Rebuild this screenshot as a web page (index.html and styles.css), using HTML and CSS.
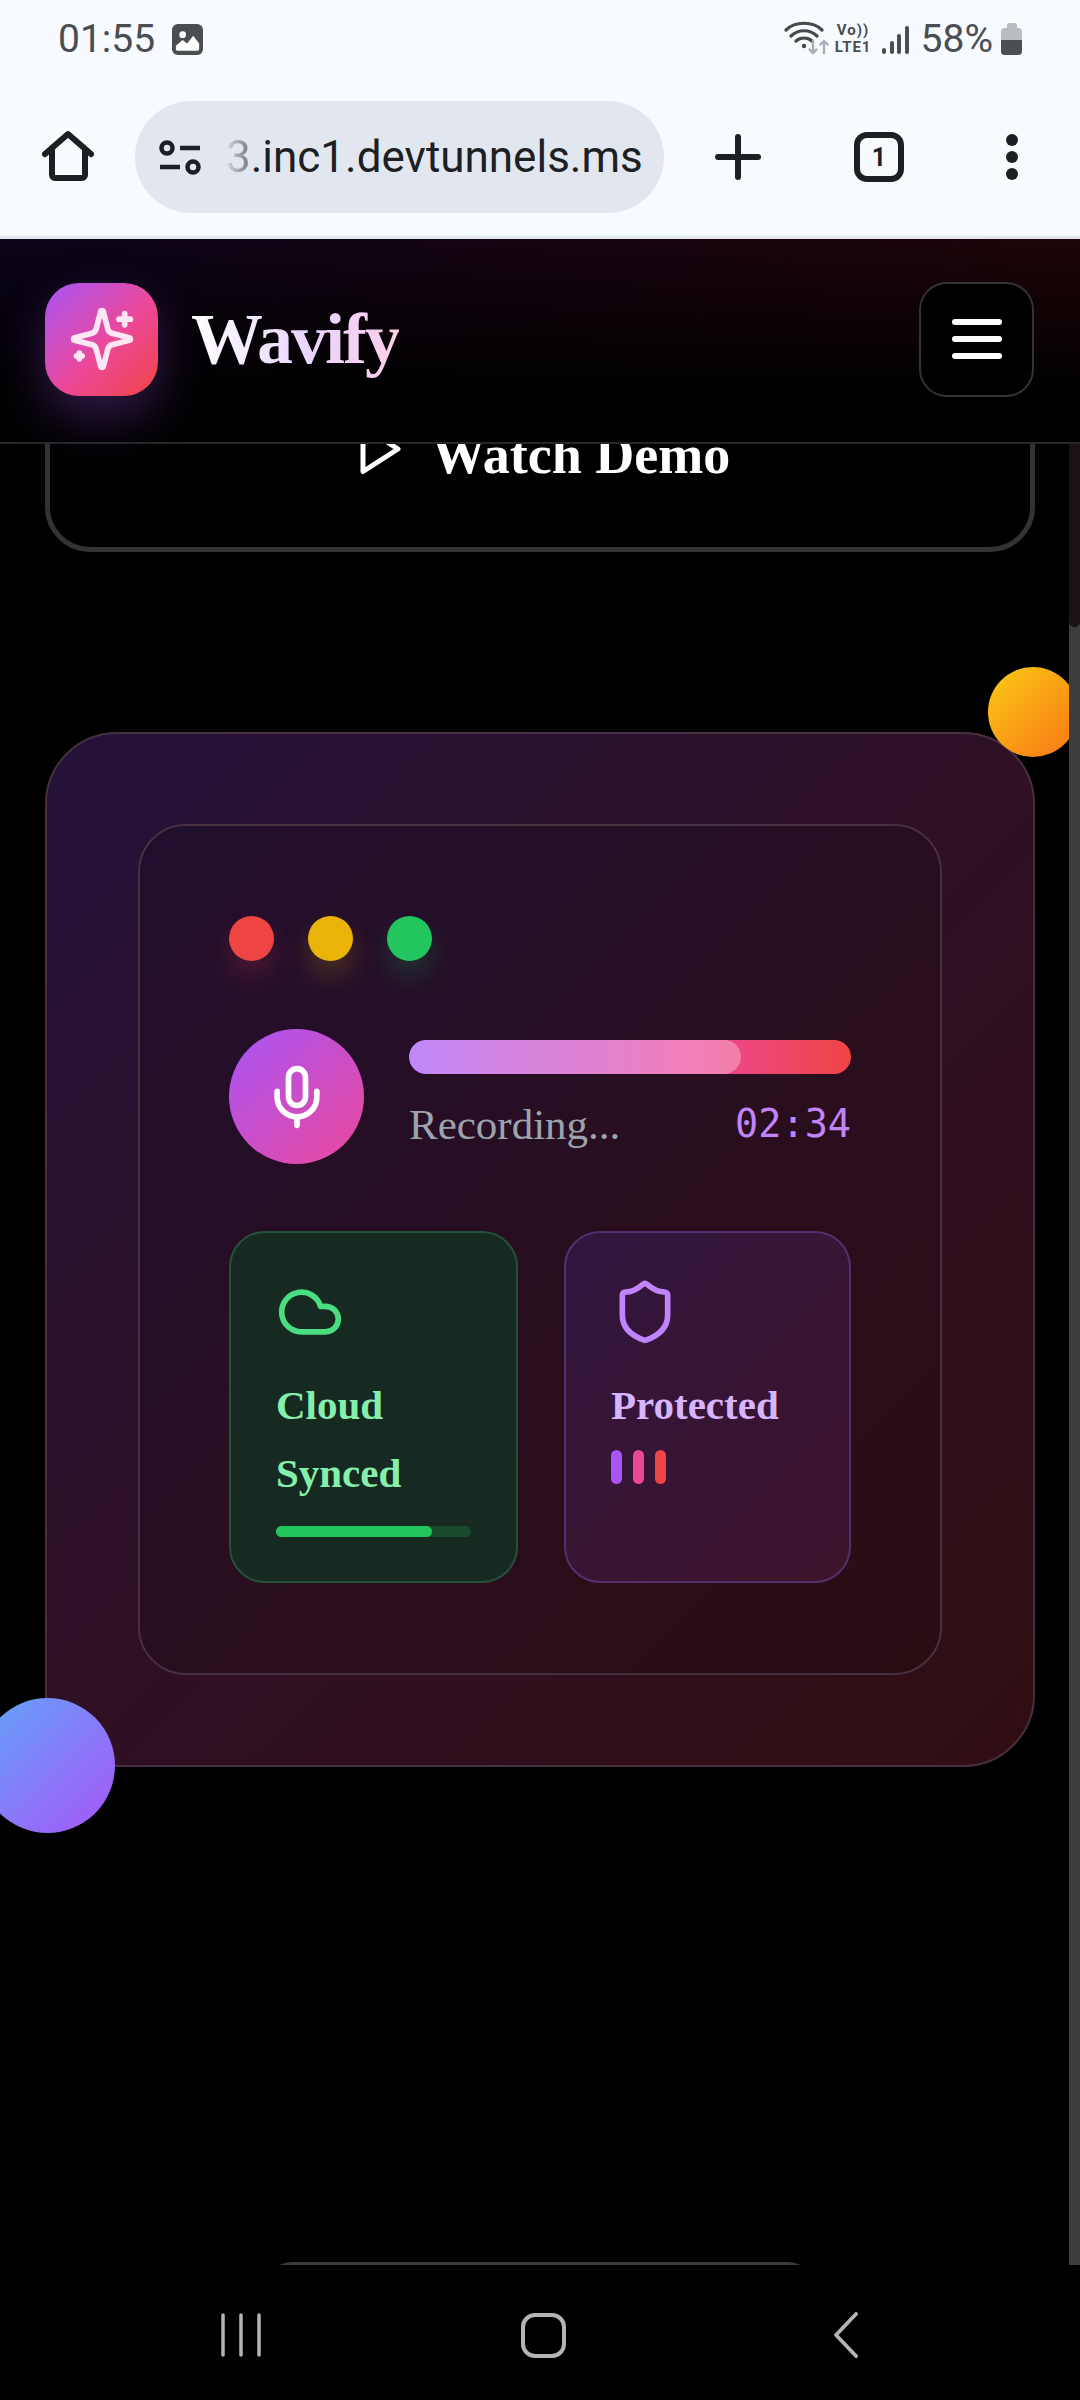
FILE: index.html
```html
<!DOCTYPE html>
<html lang="en">
<head>
    <meta charset="UTF-8">
    <meta name="viewport" content="width=device-width, initial-scale=1.0">
    <title>Wavify</title>
    <link rel="stylesheet" href="styles.css">
</head>
<body>
    <div class="phone">
        <!-- status bar -->
        <div class="status">
            <div class="status-left">
                <span class="time">01:55</span>
                <svg class="pic-icon" viewBox="0 0 32 32"><rect x="0" y="0" width="32" height="32" rx="6" fill="#4a4d52"/><circle cx="11" cy="11" r="3.500" fill="#fff"/><path d="M4 26V22.500L11 16.500L15.500 20L22 12L28 20V26a1.500 1.500 0 0 1-1.500 1.500H5.500A1.500 1.500 0 0 1 4 26z" fill="#fff"/></svg>
            </div>
            <div class="status-right">
                <svg class="wifi-icon" viewBox="0 0 46 36" fill="none" stroke-linecap="round">
                    <path d="M2 9C11 0 29 0 38 9" stroke="#45484d" stroke-width="3.200"/>
                    <path d="M7 15C14 8 26 8 33 15" stroke="#45484d" stroke-width="3.200"/>
                    <path d="M12 20C16 16 24 16 28 20" stroke="#45484d" stroke-width="3.200"/>
                    <circle cx="20" cy="25" r="2.200" fill="#45484d"/>
                    <path d="M29 20V32M25.500 28.500L29 32L32.500 28.500" stroke="#a9adb3" stroke-width="2.400"/>
                    <path d="M40 32V20M36.500 23.500L40 20L43.500 23.500" stroke="#a9adb3" stroke-width="2.400"/>
                </svg>
                <div class="volte"><span>Vo))</span><span>LTE1</span></div>
                <div class="signal"><i class="s1"></i><i class="s2"></i><i class="s3"></i><i class="s4"></i></div>
                <span class="battery-text">58%</span>
                <div class="battery"><div class="battery-cap"></div><div class="battery-body"><div class="battery-level"></div></div></div>
            </div>
        </div>

        <!-- browser toolbar -->
        <div class="toolbar">
            <svg class="home-icon" viewBox="0 0 54 52" fill="none" stroke="#1c1f24" stroke-width="6" stroke-linejoin="round" stroke-linecap="round"><path d="M4 24L27 4L50 24M11 19V45a3 3 0 0 0 3 3H41a3 3 0 0 0 3-3V19"/></svg>
            <div class="url-pill">
                <svg class="tune-icon" viewBox="0 0 44 35" fill="none" stroke="#1c1f24" stroke-width="4.500"><circle cx="9" cy="8" r="5.500"/><path d="M22 8H42"/><path d="M2 27H22"/><circle cx="35" cy="27" r="5.500"/></svg>
                <span class="url-text"><span class="url-fade">3</span>.inc1.devtunnels.ms</span>
            </div>
            <svg class="plus-icon" viewBox="0 0 46 46" stroke="#1c1f24" stroke-width="6" stroke-linecap="round"><path d="M23 3V43M3 23H43"/></svg>
            <div class="tab-count">1</div>
            <div class="menu-dots"><i></i><i></i><i></i></div>
        </div>

        <!-- page -->
        <div class="page">
            <header class="site-header">
                <div class="brand">
                    <div class="logo">
                        <svg class="lucide" viewBox="0 0 24 24">
                            <path d="M9.937 15.500A2 2 0 0 0 8.500 14.063l-6.135-1.582a.5.5 0 0 1 0-.962L8.500 9.936A2 2 0 0 0 9.937 8.500l1.582-6.135a.5.5 0 0 1 .963 0L14.063 8.500A2 2 0 0 0 15.500 9.937l6.135 1.581a.5.5 0 0 1 0 .964L15.500 14.063a2 2 0 0 0-1.437 1.437l-1.582 6.135a.5.5 0 0 1-.963 0z"/>
                            <path d="M20 3v4"/><path d="M22 5h-4"/><path d="M4 17v2"/><path d="M5 18H3"/>
                        </svg>
                    </div>
                    <span class="brand-name">Wavify</span>
                </div>
                <div class="menu-btn"><i></i><i></i><i></i></div>
            </header>

            <div class="scroll-area">
                <a class="demo-btn" href="javascript:;">
                    <svg class="lucide play-icon" viewBox="0 0 24 24"><polygon points="6 3 20 12 6 21 6 3"/></svg>
                    <span class="demo-text">Watch Demo</span>
                </a>

                <div class="hero-card">
                    <div class="orb orb-yellow"></div>
                    <div class="orb orb-blue"></div>
                    <div class="inner-card">
                        <div class="dots">
                            <span class="dot dot-red"></span>
                            <span class="dot dot-yellow"></span>
                            <span class="dot dot-green"></span>
                        </div>
                        <div class="recorder">
                            <div class="mic-btn">
                                <svg class="lucide" viewBox="0 0 24 24">
                                    <path d="M12 2a3 3 0 0 0-3 3v7a3 3 0 0 0 6 0V5a3 3 0 0 0-3-3Z"/>
                                    <path d="M19 10v2a7 7 0 0 1-14 0v-2"/>
                                    <path d="M12 19v3"/>
                                </svg>
                            </div>
                            <div class="rec-info">
                                <div class="rec-bar"><div class="rec-fill"></div></div>
                                <div class="rec-meta">
                                    <span class="rec-label">Recording...</span>
                                    <span class="rec-time">02:34</span>
                                </div>
                            </div>
                        </div>
                        <div class="feature-grid">
                            <div class="feature feature-green">
                                <svg class="lucide feature-icon" viewBox="0 0 24 24"><path d="M17.500 19H9a7 7 0 1 1 6.710-9h1.790a4.500 4.500 0 1 1 0 9Z"/></svg>
                                <p class="feature-title">Cloud Synced</p>
                                <div class="sync-bar"><div class="sync-fill"></div></div>
                            </div>
                            <div class="feature feature-purple">
                                <svg class="lucide feature-icon" viewBox="0 0 24 24"><path d="M20 13c0 5-3.500 7.500-7.660 8.950a1 1 0 0 1-.67-.01C7.500 20.500 4 18 4 13V6a1 1 0 0 1 1-1c2 0 4.500-1.200 6.240-2.720a1.170 1.170 0 0 1 1.520 0C14.510 3.810 17 5 19 5a1 1 0 0 1 1 1z"/></svg>
                                <p class="feature-title">Protected</p>
                                <div class="mini-bars"><i class="bar-purple"></i><i class="bar-pink"></i><i class="bar-red"></i></div>
                            </div>
                        </div>
                    </div>
                </div>

                <div class="next-section"></div>
            </div>

            <div class="scrollbar"><div class="scrollbar-thumb"></div></div>
        </div>

        <!-- android nav -->
        <div class="nav-bar">
            <svg class="nav-recents" viewBox="0 0 44 44" stroke="#b4b4b4" stroke-width="3.500" stroke-linecap="round"><path d="M4 2V42M22 2V42M40 2V42"/></svg>
            <div class="nav-home"></div>
            <svg class="nav-back" viewBox="0 0 24 46" fill="none" stroke="#b4b4b4" stroke-width="3.800" stroke-linecap="round" stroke-linejoin="round"><path d="M22 2L2 23L22 44"/></svg>
        </div>
    </div>
</body>
</html>
```

FILE: styles.css
```css
*{
    margin: 0;
    padding: 0;
    box-sizing: border-box;
}
a{
    text-decoration: none;
}
body{
    background-color: #000;
    font-family: "Liberation Serif", serif;
}
i{
    display: block;
}
.phone{
    width: 1080px;
    height: 2400px;
    display: flex;
    flex-direction: column;
    overflow: hidden;
}

/* status bar */
.status{
    height: 78px;
    padding: 0 58px 0 58px;
    display: flex;
    justify-content: space-between;
    align-items: center;
    background-color: #f7faff;
    color: #4a4d52;
    font-family: Roboto, sans-serif;
}
.status-left,
.status-right{
    display: flex;
    align-items: center;
}
.time{
    font-size: 39px;
}
.pic-icon{
    width: 31px;
    height: 31px;
    margin-left: 17px;
}
.wifi-icon{
    width: 46px;
    height: 36px;
}
.volte{
    width: 38px;
    display: flex;
    flex-direction: column;
    align-items: center;
    margin-left: 4px;
    font-size: 15px;
    font-weight: 700;
    letter-spacing: 1px;
    line-height: 17px;
}
.signal{
    display: flex;
    align-items: flex-end;
    gap: 3.500px;
    height: 30px;
    margin-left: 10px;
}
.signal i{
    width: 4px;
    background-color: #4a4d52;
    border-radius: 2px;
}
.s1{ height: 6px; }
.s2{ height: 13px; }
.s3{ height: 20px; }
.s4{ height: 28px; }
.battery-text{
    font-size: 39px;
    margin-left: 12px;
}
.battery{
    width: 21px;
    margin-left: 8px;
}
.battery-cap{
    width: 10px;
    height: 5px;
    margin: 0 auto;
    background-color: #b9bcc1;
    border-radius: 2px 2px 0 0;
}
.battery-body{
    height: 27px;
    display: flex;
    align-items: flex-end;
    background-color: #b9bcc1;
    border-radius: 4px;
    overflow: hidden;
}
.battery-level{
    width: 100%;
    height: 15px;
    background-color: #4b4e53;
}

/* toolbar */
.toolbar{
    height: 161px;
    padding: 0 0 0 41px;
    position: relative;
    display: flex;
    align-items: center;
    background-color: #f7faff;
    border-bottom: 3px solid #e3e8ef;
}
.home-icon{
    width: 54px;
    height: 52px;
    margin-top: -2px;
}
.url-pill{
    width: 529px;
    height: 112px;
    margin-left: 40px;
    padding-left: 23px;
    display: flex;
    align-items: center;
    background-color: #e2e7ef;
    border-radius: 56px;
    font-family: Roboto, sans-serif;
}
.tune-icon{
    width: 44px;
    height: 35px;
}
.url-text{
    margin-left: 24px;
    font-size: 44px;
    color: #1c1f24;
    white-space: nowrap;
}
.url-fade{
    background: linear-gradient(90deg, #d6d9df, #70757b);
    -webkit-background-clip: text;
    background-clip: text;
    color: transparent;
}
.plus-icon{
    width: 46px;
    height: 46px;
    margin-left: 51px;
}
.tab-count{
    width: 50px;
    height: 50px;
    margin-left: 93px;
    display: flex;
    align-items: center;
    justify-content: center;
    border: 6px solid #1c1f24;
    border-radius: 13px;
    font-family: Roboto, sans-serif;
    font-size: 25px;
    font-weight: 700;
    color: #1c1f24;
}
.menu-dots{
    margin-left: 102px;
    display: flex;
    flex-direction: column;
    gap: 5px;
}
.menu-dots i{
    width: 12px;
    height: 12px;
    background-color: #1c1f24;
    border-radius: 50%;
}

/* page */
.page{
    flex: 1;
    min-height: 0;
    position: relative;
    display: flex;
    flex-direction: column;
}
.site-header{
    height: 205px;
    flex-shrink: 0;
    padding: 0 46px 3px 45px;
    position: relative;
    z-index: 2;
    display: flex;
    justify-content: space-between;
    align-items: center;
    background: linear-gradient(to bottom, rgba(0,0,0,0), #000 75%), linear-gradient(100deg, #0b0418, #1f0508);
    border-bottom: 2px solid #262626;
}
.brand{
    display: flex;
    align-items: center;
}
.logo{
    width: 113px;
    height: 113px;
    display: flex;
    align-items: center;
    justify-content: center;
    background: linear-gradient(135deg, #a855f7, #ec4899 55%, #ef4444);
    border-radius: 34px;
    box-shadow: 0 20px 50px rgba(168, 85, 247, 0.3);
}
.lucide{
    width: 68px;
    height: 68px;
    fill: none;
    stroke: #fff;
    stroke-width: 2;
    stroke-linecap: round;
    stroke-linejoin: round;
}
.logo .lucide{
    stroke: #ffe6f3;
}
.brand-name{
    margin-left: 33px;
    font-size: 72px;
    font-weight: 700;
    letter-spacing: -2px;
    background: linear-gradient(90deg, #fff, #e9d5ff 55%, #fbcfe8);
    -webkit-background-clip: text;
    background-clip: text;
    color: transparent;
}
.menu-btn{
    width: 115px;
    height: 115px;
    display: flex;
    flex-direction: column;
    align-items: center;
    justify-content: center;
    gap: 11px;
    background-color: #000;
    border: 2px solid #333;
    border-radius: 28px;
}
.menu-btn i{
    width: 50px;
    height: 6px;
    background-color: #fff;
    border-radius: 3px;
}

/* scrolled content */
.scroll-area{
    flex: 1;
    min-height: 0;
    background-color: #000;
}
.demo-btn{
    height: 210px;
    margin: -102px 45px 0;
    display: flex;
    align-items: center;
    justify-content: center;
    gap: 24px;
    color: #fff;
    font-size: 54px;
    font-weight: 700;
    border: 5px solid #333;
    border-radius: 45px;
}
.play-icon{
    width: 60px;
    height: 60px;
    margin-top: 4px;
}
.demo-text{
    padding-top: 16px;
    margin-right: 2px;
}
.hero-card{
    margin: 180px 45px 0;
    padding: 90px 91px;
    position: relative;
    background: linear-gradient(135deg, #23123a, #2f1024 50%, #300e12);
    border: 2px solid #47303f;
    border-radius: 72px;
}
.orb{
    position: absolute;
    border-radius: 50%;
}
.orb-yellow{
    width: 90px;
    height: 90px;
    top: -67px;
    right: -45px;
    background: linear-gradient(135deg, #facc15, #f97316);
}
.orb-blue{
    width: 135px;
    height: 135px;
    bottom: -68px;
    left: -67px;
    z-index: 1;
    background: linear-gradient(135deg, #60a5fa, #a855f7);
}
.inner-card{
    padding: 90px 89px;
    background-color: rgba(0, 0, 0, 0.12);
    border: 2px solid #47303f;
    border-radius: 48px;
}
.dots{
    display: flex;
    gap: 34px;
}
.dot{
    width: 45px;
    height: 45px;
    border-radius: 50%;
}
.dot-red{
    background-color: #ef4444;
    box-shadow: 0 15px 30px rgba(239, 68, 68, 0.22);
}
.dot-yellow{
    background-color: #eab308;
    box-shadow: 0 15px 30px rgba(234, 179, 8, 0.22);
}
.dot-green{
    background-color: #22c55e;
    box-shadow: 0 15px 30px rgba(34, 197, 94, 0.22);
}
.recorder{
    margin-top: 68px;
    display: flex;
    align-items: flex-start;
    gap: 45px;
}
.mic-btn{
    width: 135px;
    height: 135px;
    flex-shrink: 0;
    display: flex;
    align-items: center;
    justify-content: center;
    background: linear-gradient(135deg, #a855f7, #ec4899);
    border-radius: 50%;
}
.rec-info{
    flex: 1;
    padding-top: 11px;
}
.rec-bar{
    height: 34px;
    background: linear-gradient(90deg, #a855f7, #ec4899 65%, #ef4444);
    border-radius: 17px;
    overflow: hidden;
}
.rec-fill{
    width: 75%;
    height: 100%;
    background-color: rgba(255, 255, 255, 0.3);
    border-radius: 17px;
}
.rec-meta{
    margin-top: 24px;
    display: flex;
    justify-content: space-between;
    align-items: flex-start;
}
.rec-label{
    font-size: 43px;
    line-height: 54px;
    color: #9ca3af;
}
.rec-time{
    font-family: "DejaVu Sans Mono", monospace;
    font-size: 38.500px;
    line-height: 46px;
    margin-top: 3px;
    color: #c084fc;
}
.feature-grid{
    margin-top: 67px;
    display: grid;
    grid-template-columns: 289px 287px;
    gap: 46px;
}
.feature{
    height: 352px;
    padding: 45px;
    border-radius: 36px;
}
.feature-green{
    background-color: #172a22;
    border: 2px solid #25503a;
}
.feature-purple{
    background: linear-gradient(135deg, #31163f, #3d132a);
    border: 2px solid #552e6e;
}
.feature-icon{
    display: block;
}
.feature-green .feature-icon{
    stroke: #4ade80;
}
.feature-purple .feature-icon{
    stroke: #c084fc;
}
.feature-title{
    margin-top: 25px;
    font-size: 41px;
    font-weight: 700;
    line-height: 68px;
}
.feature-green .feature-title{
    color: #86efac;
}
.feature-purple .feature-title{
    color: #d8b4fe;
}
.sync-bar{
    height: 11px;
    margin-top: 19px;
    background-color: #1a4a2e;
    border-radius: 6px;
}
.sync-fill{
    width: 80%;
    height: 100%;
    background-color: #22c55e;
    border-radius: 6px;
}
.mini-bars{
    margin-top: 11px;
    display: flex;
    gap: 11px;
}
.mini-bars i{
    width: 11px;
    height: 34px;
    border-radius: 6px;
}
.bar-purple{ background-color: #a855f7; }
.bar-pink{ background-color: #ec4899; }
.bar-red{ background-color: #ef4444; }
.next-section{
    height: 200px;
    margin: 495px 263px 0;
    border-top: 3px solid #3a3a3a;
    border-radius: 30px 30px 0 0;
}

/* scrollbar */
.scrollbar{
    width: 11px;
    position: absolute;
    top: 205px;
    right: 0;
    bottom: 0;
    z-index: 3;
    background-color: #3d3d3d;
}
.scrollbar-thumb{
    height: 183px;
    background-color: #1a1214;
    border-radius: 0 0 6px 6px;
}

/* android nav */
.nav-bar{
    height: 135px;
    flex-shrink: 0;
    padding-top: 5px;
    position: relative;
    z-index: 4;
    display: flex;
    align-items: center;
    background-color: #000;
}
.nav-recents{
    width: 44px;
    height: 44px;
    margin-left: 219px;
}
.nav-home{
    width: 45px;
    height: 45px;
    margin-left: 258px;
    border: 4px solid #b4b4b4;
    border-radius: 14px;
}
.nav-back{
    width: 24px;
    height: 46px;
    margin-left: 268px;
}
```
